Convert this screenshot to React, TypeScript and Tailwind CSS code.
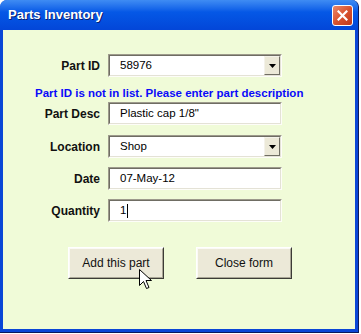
import React from 'react';

// XP-style "Parts Inventory" user form
const font = "font-['Liberation_Sans',Arial,sans-serif]";

function Field({ value, caret }: { value: string; caret?: boolean }) {
  return (
    <div className="flex h-[23px] w-[174px] items-center border border-t-[#9d9a8c] border-l-[#9d9a8c] border-b-[#fdfdf8] border-r-[#fdfdf8] bg-white">
      <div className="flex h-full w-full items-center border border-t-[#6f6d63] border-l-[#6f6d63] border-b-[#e4e2d6] border-r-[#e4e2d6] pl-[10px] text-[11.5px] text-black">
        <span>{value}</span>
        {caret && <span className="ml-[1px] inline-block h-[14px] w-px bg-black" />}
      </div>
    </div>
  );
}

function Combo({ value }: { value: string }) {
  return (
    <div className="flex h-[23px] w-[174px] border border-t-[#9d9a8c] border-l-[#9d9a8c] border-b-[#fdfdf8] border-r-[#fdfdf8] bg-white">
      <div className="flex h-full w-full items-center border border-t-[#6f6d63] border-l-[#6f6d63] border-b-[#e4e2d6] border-r-[#e4e2d6] pl-[10px] text-[11.5px] text-black">
        <span className="flex-1">{value}</span>
        <div className="flex h-[19px] w-[16px] items-center justify-center border border-t-[#f4f2ea] border-l-[#f4f2ea] border-b-[#6f6d63] border-r-[#6f6d63] bg-[#ece9d8]">
          <svg width="7" height="4" viewBox="0 0 7 4">
            <path d="M0 0h7L3.5 4z" fill="#000" />
          </svg>
        </div>
      </div>
    </div>
  );
}

function Row({ label, children, className = '' }: { label: string; children: React.ReactNode; className?: string }) {
  return (
    <div className={`flex items-center ${className}`}>
      <div className="w-[97px] text-right text-[12px] font-bold text-[#111]">{label}</div>
      <div className="ml-[8px]">{children}</div>
    </div>
  );
}

function Btn({ label }: { label: string }) {
  return (
    <div className="flex h-[32px] w-[96px] border border-t-white border-l-white border-b-[#3c3b36] border-r-[#3c3b36] bg-[#ece9d8]">
      <div className="flex h-full w-full items-center justify-center border border-t-[#fbfaf6] border-l-[#fbfaf6] border-b-[#a9a695] border-r-[#a9a695] text-[12px] text-[#111]">
        {label}
      </div>
    </div>
  );
}

export default function App() {
  return (
    <div className={`${font} h-[334px] w-[361px] bg-white`}>
      <div className="relative flex h-[333px] w-[359px] flex-col overflow-hidden rounded-t-[7px] border-b border-r border-[#0a1a5c] bg-[#0a46d6]">
        {/* title bar */}
        <div className="flex h-[30px] items-center bg-gradient-to-b from-[#3f8cf3] via-[#0558e6] via-40% to-[#0346d8] pl-[8px] pr-[5px]">
          <span className="flex-1 text-[13px] font-bold text-white [text-shadow:1px_1px_0_#0a1f6e]">Parts Inventory</span>
          <div className="flex h-[21px] w-[21px] items-center justify-center rounded-[3px] border border-white bg-gradient-to-br from-[#e9886a] via-[#d9532f] to-[#c0381a]">
            <svg width="11" height="11" viewBox="0 0 11 11">
              <path d="M1.5 1.5l8 8M9.5 1.5l-8 8" stroke="#fff" strokeWidth="2.2" strokeLinecap="square" />
            </svg>
          </div>
        </div>

        {/* client area */}
        <div className="mx-[3px] mb-[3px] flex flex-1 flex-col bg-[#f0fbd8] pt-[24px]">
          <Row label="Part ID">
            <Combo value="58976" />
          </Row>
          <div className="ml-[32px] mt-[9px] h-[14px] text-[11.5px] font-bold leading-[14px] text-[#0a0afa]">
            Part ID is not in list. Please enter part description
          </div>
          <Row label="Part Desc" className="mt-[2px]">
            <Field value={'Plastic cap 1/8"'} />
          </Row>
          <Row label="Location" className="mt-[10px]">
            <Combo value="Shop" />
          </Row>
          <Row label="Date" className="mt-[9px]">
            <Field value="07-May-12" />
          </Row>
          <Row label="Quantity" className="mt-[9px]">
            <Field value="1" caret />
          </Row>
          <div className="mt-[25px] flex gap-[32px] pl-[65px]">
            <Btn label="Add this part" />
            <Btn label="Close form" />
          </div>
        </div>

        {/* mouse pointer */}
        <svg className="absolute left-[139px] top-[269px]" width="13" height="21" viewBox="0 0 13 21">
          <path d="M0.5 0.5v16l4-4 3 7 2.5-1-3-7h5.5z" fill="#fff" stroke="#000" strokeWidth="1" strokeLinejoin="miter" />
        </svg>
      </div>
    </div>
  );
}
